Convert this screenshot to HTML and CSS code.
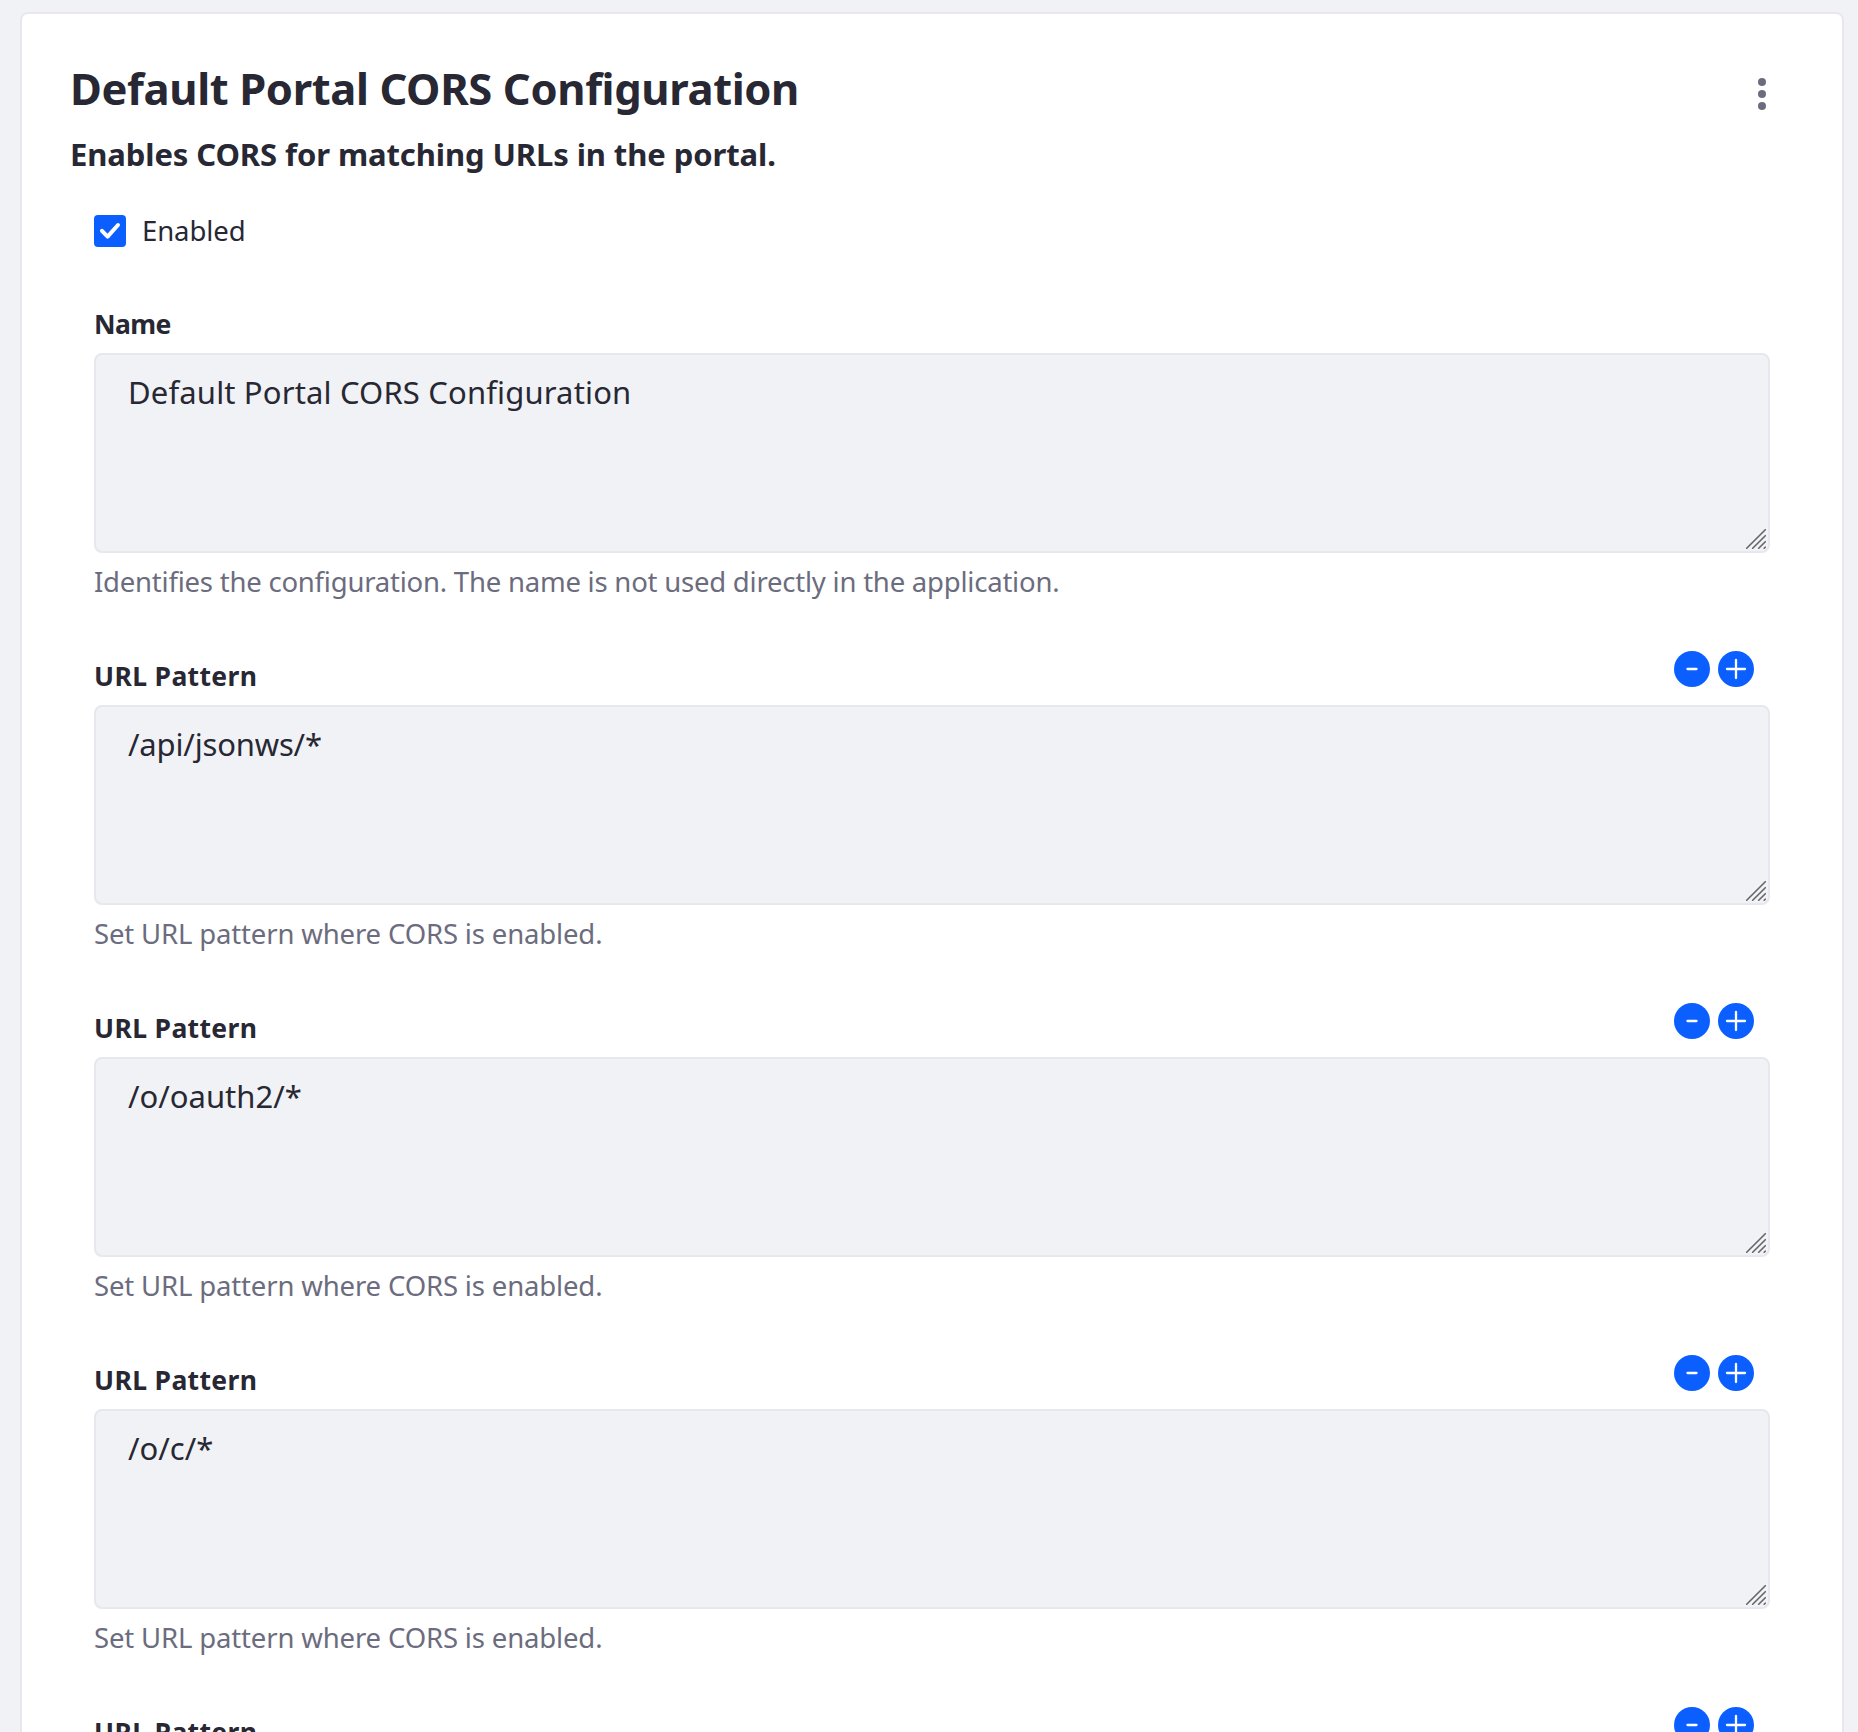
FILE: index.html
```html
<!DOCTYPE html>
<html lang="en">
<head>
<meta charset="utf-8">
<title>Default Portal CORS Configuration</title>
<link rel="stylesheet" href="styles.css">
</head>
<body>
<svg class="defs" width="0" height="0">
  <symbol id="grip" viewBox="0 0 20 20"><path d="M.7 19.3 19.3.7M6.7 19.3 19.3 6.7M12.7 19.3 19.3 12.7M18.2 19.3 19.3 18.2"/></symbol>
  <symbol id="minus" viewBox="0 0 36 36"><path d="M13.5 18h9"/></symbol>
  <symbol id="plus" viewBox="0 0 36 36"><path d="M9 18h18M18 9v18"/></symbol>
</svg>
<main class="sheet">
  <header class="sheet-header">
    <h1 class="title">Default Portal CORS Configuration</h1>
    <button class="kebab" aria-label="Options"><svg width="8" height="32" viewBox="0 0 8 32"><circle cx="4" cy="4" r="4"/><circle cx="4" cy="16" r="4"/><circle cx="4" cy="28" r="4"/></svg></button>
  </header>
  <h2 class="subtitle">Enables CORS for matching URLs in the portal.</h2>
  <form class="form">
    <div class="check-row">
      <span class="checkbox"><svg width="32" height="32" viewBox="0 0 32 32"><path d="M8 15.8 13.6 21.6 24 10"/></svg></span>
      <span class="check-label">Enabled</span>
    </div>
    <div class="field">
      <div class="field-head"><label class="label label-name">Name</label></div>
      <div class="control"><textarea class="input input-name">Default Portal CORS Configuration</textarea><svg class="grip"><use href="#grip"/></svg></div>
      <p class="help help-name">Identifies the configuration. The name is not used directly in the application.</p>
    </div>
    <div class="field">
      <div class="field-head"><label class="label">URL Pattern</label><div class="actions"><button class="round" type="button"><svg><use href="#minus"/></svg></button><button class="round" type="button"><svg><use href="#plus"/></svg></button></div></div>
      <div class="control"><textarea class="input input-api">/api/jsonws/*</textarea><svg class="grip"><use href="#grip"/></svg></div>
      <p class="help">Set URL pattern where CORS is enabled.</p>
    </div>
    <div class="field">
      <div class="field-head"><label class="label">URL Pattern</label><div class="actions"><button class="round" type="button"><svg><use href="#minus"/></svg></button><button class="round" type="button"><svg><use href="#plus"/></svg></button></div></div>
      <div class="control"><textarea class="input">/o/oauth2/*</textarea><svg class="grip"><use href="#grip"/></svg></div>
      <p class="help">Set URL pattern where CORS is enabled.</p>
    </div>
    <div class="field">
      <div class="field-head"><label class="label">URL Pattern</label><div class="actions"><button class="round" type="button"><svg><use href="#minus"/></svg></button><button class="round" type="button"><svg><use href="#plus"/></svg></button></div></div>
      <div class="control"><textarea class="input">/o/c/*</textarea><svg class="grip"><use href="#grip"/></svg></div>
      <p class="help">Set URL pattern where CORS is enabled.</p>
    </div>
    <div class="field">
      <div class="field-head"><label class="label">URL Pattern</label><div class="actions"><button class="round" type="button"><svg><use href="#minus"/></svg></button><button class="round" type="button"><svg><use href="#plus"/></svg></button></div></div>
    </div>
  </form>
</main>
</body>
</html>
```
FILE: styles.css
```css
* {
  box-sizing: border-box;
}

body {
  margin: 0;
  height: 1732px;
  overflow: hidden;
  padding: 12px 14px 0 20px;
  background: #f1f2f5;
  color: #272833;
  font-family: "Noto Sans", "Open Sans", sans-serif;
}

.defs {
  display: block;
}

h1, h2, p {
  margin: 0;
}

button {
  border: 0;
  padding: 0;
  background: none;
}

svg {
  display: block;
}

.sheet {
  height: 1800px;
  padding: 44px 72px 0 48px;
  border: 2px solid #e7e7ed;
  border-radius: 8px;
  background: #fff;
}

.sheet-header {
  display: flex;
  justify-content: space-between;
  height: 60px;
}

.title {
  font-size: 43.5px;
  line-height: 60px;
  letter-spacing: -0.37px;
}

.kebab {
  height: 32px;
  margin: 20px 4px 0 0;
  fill: #6b6c7e;
}

.subtitle {
  margin-top: 15px;
  font-size: 31px;
  line-height: 42px;
  letter-spacing: -0.1px;
}

.form {
  padding: 40px 0 0 24px;
}

.check-row {
  display: flex;
  gap: 16px;
  margin-bottom: 52px;
}

.checkbox {
  width: 32px;
  height: 32px;
  border-radius: 4px;
  background: #0b5fff;
}

.checkbox path {
  fill: none;
  stroke: #fff;
  stroke-width: 4;
  stroke-linecap: round;
  stroke-linejoin: round;
}

.check-label {
  font-size: 27.5px;
  line-height: 32px;
  letter-spacing: -0.1px;
}

.field {
  margin-bottom: 50px;
}

.field-head {
  display: flex;
  justify-content: space-between;
  height: 54px;
  padding-right: 16px;
}

.label {
  padding-top: 9px;
  font-size: 26.5px;
  font-weight: 700;
  line-height: 32px;
  letter-spacing: 0.36px;
}

.label-name {
  letter-spacing: -0.6px;
}

.actions {
  display: flex;
  gap: 8px;
}

.round {
  width: 36px;
  height: 36px;
  border-radius: 50%;
  background: #0b5fff;
}

.round svg {
  width: 36px;
  height: 36px;
  fill: none;
  stroke: #fff;
  stroke-width: 2.3;
  stroke-linecap: round;
}

.control {
  position: relative;
  height: 200px;
}

.input {
  display: block;
  width: 100%;
  height: 200px;
  padding: 13px 32px;
  border: 2px solid #e7e7ed;
  border-radius: 8px;
  outline: 0;
  resize: none;
  overflow: hidden;
  background: #f1f2f5;
  color: #272833;
  font: 400 31px/48px "Noto Sans", "Open Sans", sans-serif;
}

.input-name {
  letter-spacing: 0.16px;
}

.input-api {
  letter-spacing: -0.17px;
}

.grip {
  position: absolute;
  right: 4px;
  bottom: 4px;
  width: 20px;
  height: 20px;
  fill: none;
  stroke: #666;
  stroke-width: 1.6;
  stroke-linecap: round;
}

.help {
  margin: 9px 0 -1px;
  color: #6b6c7e;
  font-size: 27.5px;
  line-height: 40px;
  letter-spacing: -0.15px;
}

.help-name {
  letter-spacing: -0.22px;
}
```
